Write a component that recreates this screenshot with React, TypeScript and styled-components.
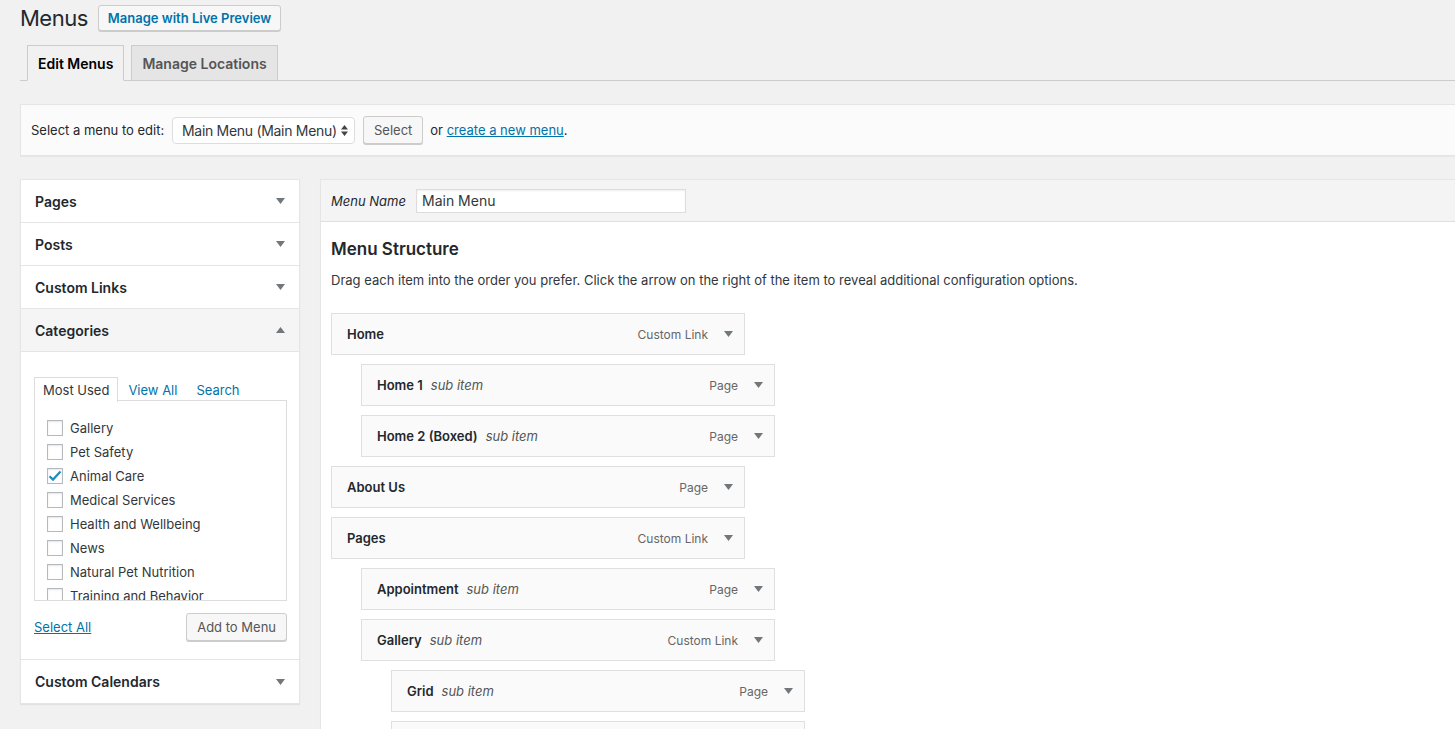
import React from 'react';
import styled, { createGlobalStyle } from 'styled-components';

const GlobalStyle = createGlobalStyle`
  html, body {
    margin: 0;
    padding: 0;
    background: #f1f1f1;
    overflow: hidden;
  }
  body {
    font-family: Inter, "Open Sans", "Liberation Sans", sans-serif;
    font-size: 13px;
    color: #23282d;
  }
  * { box-sizing: border-box; }
`;

const Wrap = styled.div`
  padding: 5px 0 0 20px;
  margin-right: -40px;
`;

const HeaderRow = styled.div`
  display: flex;
  align-items: center;
  gap: 10px;
  height: 26px;
`;

const PageTitle = styled.h1`
  margin: 0;
  font-size: 22px;
  font-weight: 400;
  line-height: 26px;
  color: #23282d;
  letter-spacing: -0.5px;
`;

const Button = styled.button<{ $link?: boolean }>`
  height: ${(p) => (p.$link ? '26px' : '28px')};
  padding: 0 ${(p) => (p.$link ? '9px' : '10px')};
  border: 1px solid #ccc;
  border-radius: 3px;
  background: #f7f7f7;
  box-shadow: 0 1px 0 #ccc;
  font-family: inherit;
  font-size: 13px;
  font-weight: ${(p) => (p.$link ? 600 : 400)};
  color: ${(p) => (p.$link ? '#0073aa' : '#555')};
  white-space: nowrap;
  cursor: pointer;
`;

const NavTabs = styled.div`
  margin-top: 14px;
  display: flex;
  gap: 7px;
  padding-left: 7px;
  border-bottom: 1px solid #ccc;
  height: 36px;
`;

const NavTab = styled.div<{ $active?: boolean }>`
  height: 36px;
  padding: 0 10px;
  display: flex;
  align-items: center;
  font-size: 14px;
  font-weight: 600;
  border: 1px solid #ccc;
  border-bottom-color: ${(p) => (p.$active ? '#f1f1f1' : '#ccc')};
  background: ${(p) => (p.$active ? '#f1f1f1' : '#e5e5e5')};
  color: ${(p) => (p.$active ? '#000' : '#555')};
`;

const ManageBox = styled.div`
  margin-top: 23px;
  height: 52px;
  padding: 0 10px;
  display: flex;
  align-items: center;
  background: #fbfbfb;
  border: 1px solid #e5e5e5;
  box-shadow: 0 1px 1px rgba(0, 0, 0, 0.04);
`;

const FieldLabel = styled.span`
  width: 141px;
  flex: none;
  color: #23282d;
`;

const FakeSelect = styled.div`
  width: 183px;
  flex: none;
  height: 27px;
  padding: 0 6px 0 9px;
  display: flex;
  align-items: center;
  justify-content: space-between;
  background: #fff;
  border: 1px solid #ddd;
  border-radius: 4px;
  font-size: 14px;
  letter-spacing: -0.3px;
  white-space: nowrap;
  color: #32373c;
  margin-right: 8px;
`;

const OrText = styled.span`
  margin-left: 7px;
  color: #23282d;
`;

const Link = styled.a`
  color: #0073aa;
  text-decoration: underline;
`;

const Columns = styled.div`
  margin-top: 23px;
  display: flex;
  gap: 20px;
  align-items: flex-start;
`;

const LeftCol = styled.div`
  width: 280px;
  flex: none;
  background: #fff;
  border: 1px solid #e5e5e5;
  box-shadow: 0 1px 1px rgba(0, 0, 0, 0.06);
`;

const AccordionHeader = styled.div<{ $open?: boolean; $last?: boolean }>`
  height: 43px;
  padding: 0 14px;
  display: flex;
  align-items: center;
  justify-content: space-between;
  font-size: 14px;
  font-weight: 600;
  color: #23282d;
  background: ${(p) => (p.$open ? '#f5f5f5' : '#fff')};
  border-bottom: ${(p) => (p.$last ? 'none' : '1px solid #e5e5e5')};
`;

const AccordionBody = styled.div`
  padding: 25px 12px 18px 13px;
  border-bottom: 1px solid #e5e5e5;
`;

const CatTabs = styled.div`
  display: flex;
  height: 24px;
`;

const CatTab = styled.div<{ $active?: boolean }>`
  padding: 0 8px;
  margin-right: 1px;
  display: flex;
  align-items: center;
  color: ${(p) => (p.$active ? '#32373c' : '#0073aa')};
  background: ${(p) => (p.$active ? '#fff' : 'transparent')};
  border: 1px solid ${(p) => (p.$active ? '#ddd' : 'transparent')};
  border-bottom: none;
  position: relative;
  z-index: 1;
  height: ${(p) => (p.$active ? '25px' : '24px')};
`;

const CatBox = styled.div`
  height: 201px;
  border: 1px solid #ddd;
  padding-top: 15px;
  overflow: hidden;
  background: #fff;
  margin-top: -1px;
`;

const CatRow = styled.label`
  height: 24px;
  padding-left: 12px;
  display: flex;
  align-items: center;
  gap: 7px;
  color: #32373c;
`;

const Checkbox = styled.span`
  width: 16px;
  height: 16px;
  flex: none;
  display: flex;
  align-items: center;
  justify-content: center;
  border: 1px solid #b4b9be;
  background: #fff;
  box-shadow: inset 0 1px 2px rgba(0, 0, 0, 0.1);
`;

const CatActions = styled.div`
  margin-top: 12px;
  display: flex;
  align-items: center;
  justify-content: space-between;
`;

const RightCol = styled.div`
  flex: 1;
  min-height: 620px;
  background: #fff;
  border: 1px solid #e5e5e5;
  border-right: none;
  box-shadow: 0 1px 1px rgba(0, 0, 0, 0.04);
`;

const MenuHeader = styled.div`
  height: 42px;
  padding: 0 10px;
  display: flex;
  align-items: center;
  background: #f4f4f4;
  border-bottom: 1px solid #dfdfdf;
`;

const MenuNameLabel = styled.span`
  width: 85px;
  font-style: italic;
  color: #23282d;
`;

const NameInput = styled.div`
  width: 270px;
  height: 24px;
  padding: 0 5px;
  display: flex;
  align-items: center;
  background: #fff;
  border: 1px solid #ddd;
  box-shadow: inset 0 1px 2px rgba(0, 0, 0, 0.07);
  font-size: 14px;
  color: #32373c;
`;

const MenuBody = styled.div`
  padding: 15px 10px 0;
`;

const SectionTitle = styled.h3`
  margin: 0;
  font-size: 17px;
  font-weight: 600;
  line-height: 24px;
  color: #23282d;
`;

const Description = styled.p`
  margin: 9px 0 23px;
  line-height: 20px;
  color: #32373c;
`;

const ItemList = styled.div`
  display: flex;
  flex-direction: column;
  gap: 9px;
`;

const MenuItem = styled.div<{ $depth: number }>`
  width: 414px;
  height: 42px;
  margin-left: ${(p) => p.$depth * 30}px;
  padding: 0 11px 0 15px;
  display: flex;
  align-items: center;
  background: #fafafa;
  border: 1px solid #dfdfdf;
`;

const ItemTitle = styled.span`
  font-weight: 600;
  color: #23282d;
`;

const SubLabel = styled.span`
  margin-left: 8px;
  font-style: italic;
  color: #555;
`;

const ItemType = styled.span`
  margin-left: auto;
  margin-right: 16px;
  font-size: 12px;
  color: #666;
`;

const Caret = ({ up }: { up?: boolean }) => (
  <svg width="9" height="6" viewBox="0 0 9 6">
    <path d={up ? 'M0 6 L4.5 0 L9 6 Z' : 'M0 0 L9 0 L4.5 6 Z'} fill="#72777c" />
  </svg>
);

const categories = [
  { name: 'Gallery' },
  { name: 'Pet Safety' },
  { name: 'Animal Care', checked: true },
  { name: 'Medical Services' },
  { name: 'Health and Wellbeing' },
  { name: 'News' },
  { name: 'Natural Pet Nutrition' },
  { name: 'Training and Behavior' },
];

const menuItems = [
  { title: 'Home', type: 'Custom Link', depth: 0 },
  { title: 'Home 1', type: 'Page', depth: 1, sub: true },
  { title: 'Home 2 (Boxed)', type: 'Page', depth: 1, sub: true },
  { title: 'About Us', type: 'Page', depth: 0 },
  { title: 'Pages', type: 'Custom Link', depth: 0 },
  { title: 'Appointment', type: 'Page', depth: 1, sub: true },
  { title: 'Gallery', type: 'Custom Link', depth: 1, sub: true },
  { title: 'Grid', type: 'Page', depth: 2, sub: true },
  { title: 'Masonry', type: 'Page', depth: 2, sub: true },
];

export default function App() {
  return (
    <Wrap>
      <GlobalStyle />
      <HeaderRow>
        <PageTitle>Menus</PageTitle>
        <Button $link>Manage with Live Preview</Button>
      </HeaderRow>

      <NavTabs>
        <NavTab $active>Edit Menus</NavTab>
        <NavTab>Manage Locations</NavTab>
      </NavTabs>

      <ManageBox>
        <FieldLabel>Select a menu to edit:</FieldLabel>
        <FakeSelect>
          <span>Main Menu (Main Menu)</span>
          <svg width="7" height="11" viewBox="0 0 7 11">
            <path d="M0 4.5 L3.5 0 L7 4.5 Z M0 6.5 L7 6.5 L3.5 11 Z" fill="#444" />
          </svg>
        </FakeSelect>
        <Button>Select</Button>
        <OrText>
          or <Link>create a new menu</Link>.
        </OrText>
      </ManageBox>

      <Columns>
        <LeftCol>
          <AccordionHeader>
            Pages <Caret />
          </AccordionHeader>
          <AccordionHeader>
            Posts <Caret />
          </AccordionHeader>
          <AccordionHeader>
            Custom Links <Caret />
          </AccordionHeader>
          <AccordionHeader $open>
            Categories <Caret up />
          </AccordionHeader>
          <AccordionBody>
            <CatTabs>
              <CatTab $active>Most Used</CatTab>
              <CatTab>View All</CatTab>
              <CatTab>Search</CatTab>
            </CatTabs>
            <CatBox>
              {categories.map((c) => (
                <CatRow key={c.name}>
                  <Checkbox>
                    {c.checked && (
                      <svg width="14" height="12" viewBox="0 0 14 12">
                        <path
                          d="M1.5 6.2 L5 9.6 L12.5 1.5"
                          stroke="#1e8cbe"
                          strokeWidth="2.2"
                          fill="none"
                        />
                      </svg>
                    )}
                  </Checkbox>
                  {c.name}
                </CatRow>
              ))}
            </CatBox>
            <CatActions>
              <Link>Select All</Link>
              <Button>Add to Menu</Button>
            </CatActions>
          </AccordionBody>
          <AccordionHeader $last>
            Custom Calendars <Caret />
          </AccordionHeader>
        </LeftCol>

        <RightCol>
          <MenuHeader>
            <MenuNameLabel>Menu Name</MenuNameLabel>
            <NameInput>Main Menu</NameInput>
          </MenuHeader>
          <MenuBody>
            <SectionTitle>Menu Structure</SectionTitle>
            <Description>
              Drag each item into the order you prefer. Click the arrow on the right of the item to
              reveal additional configuration options.
            </Description>
            <ItemList>
              {menuItems.map((item) => (
                <MenuItem key={item.title} $depth={item.depth}>
                  <ItemTitle>{item.title}</ItemTitle>
                  {item.sub && <SubLabel>sub item</SubLabel>}
                  <ItemType>{item.type}</ItemType>
                  <Caret />
                </MenuItem>
              ))}
            </ItemList>
          </MenuBody>
        </RightCol>
      </Columns>
    </Wrap>
  );
}
